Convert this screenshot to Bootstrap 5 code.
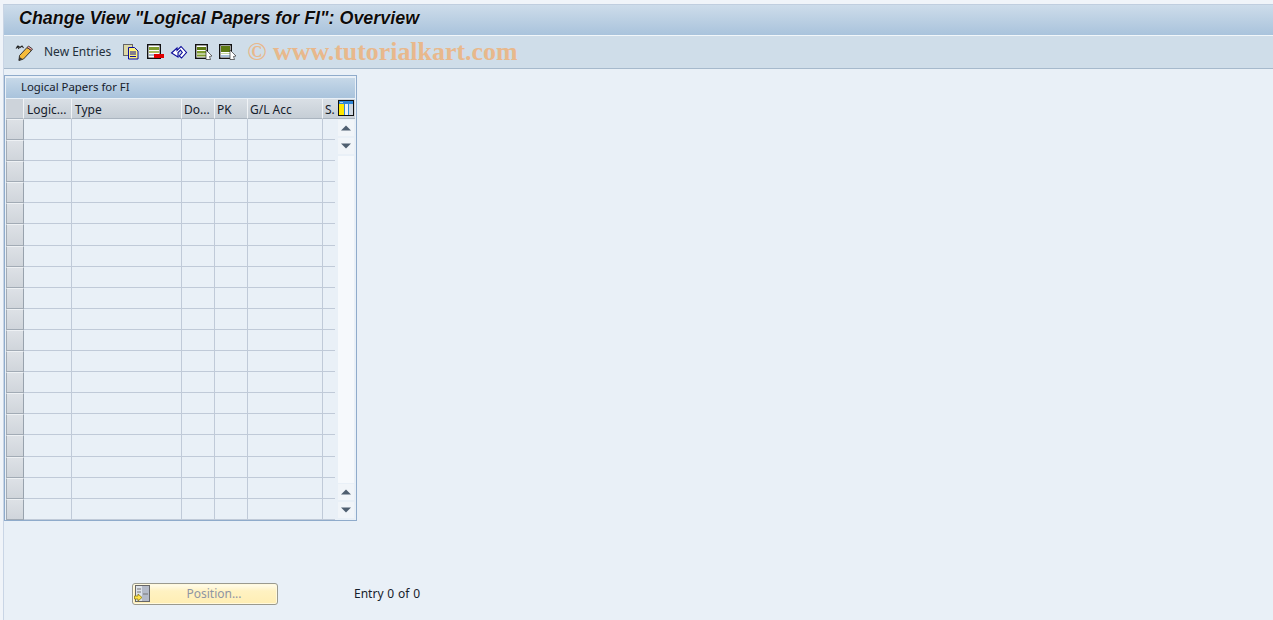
<!DOCTYPE html>
<html lang="en">
<head>
<meta charset="utf-8">
<title>Change View</title>
<link rel="stylesheet" href="https://cdn.jsdelivr.net/npm/bootstrap@5.3.0/dist/css/bootstrap.min.css">
<style>
html,body{height:620px;overflow:hidden}
body{background:#f0f4f9;font-family:"Noto Sans","Liberation Sans",sans-serif;font-size:12px;color:#16202b;line-height:1.2}
.sap-shell{height:616px;margin:4px 0 0 3px;background:#e9f0f7;border-left:1px solid #c9d5e5;border-top:1px solid #c0cedf}
.sap-title{height:31px;background:linear-gradient(#cddcea,#a9c3dc);border-bottom:1px solid #f1f6fa;padding-left:15px;font:italic 700 17.9px/26px "Liberation Sans",sans-serif;color:#0c0c0c;text-shadow:0 0 1px #fff}
.sap-toolbar{height:33px;background:#cfdde9;border-bottom:1px solid #a6b9cc;padding-left:11px;color:#24303c}
.sap-tb-icon{display:block;flex:none;margin-right:8px;overflow:visible}
.sap-tb-pen{margin-right:0}
.sap-new{margin:0 12px 0 11px;font-size:12px}
.sap-mark{font:700 25.9px/1 "Liberation Serif",serif;color:#e8b88c;margin-left:4px;white-space:nowrap}
.sap-panel{width:353px;height:446px;margin:6px 0 0 0;border:1px solid #8fabcb;padding:2px 2px 2px 1px}
.sap-panel-title{height:20px;background:linear-gradient(#c6d8e8,#a9c3dc);padding-left:15px;line-height:18px;font-size:11.4px;color:#16202b;margin-bottom:1px;width:349px}
.sap-grid{width:332px;table-layout:fixed;border-collapse:separate;border-spacing:0;flex:none}
.sap-grid th{height:20px;padding:3px 0 0 3px;font-weight:400;background:linear-gradient(#d9dfe5,#c6ced6);border-right:1px solid #f0f3f6;border-bottom:1px solid #aab4bf;white-space:nowrap;overflow:hidden;color:#16202b}
.sap-grid th:nth-child(n+4){padding-left:2px}
.sap-grid th:last-child{border-right:0}
.sap-grid td{height:21px;padding:0;border-right:1px solid #c0cad8;border-bottom:1px solid #c0cad8}
.sap-grid td:last-child{border:0;background:linear-gradient(to right,#c0cad8 12px,transparent 12px) bottom/100% 1px no-repeat}
.sap-grid th.sap-sel{padding:0;background:#cdd3da}
.sap-grid td.sap-sel{background:linear-gradient(#dde1e6,#d0d5db);border:1px solid #a2abb5;border-top-color:#eef1f4;border-right:1px solid #98a2ad}
.sap-side{width:17px;flex:none}
.sap-corner{height:20px;background:#cdd3da;border-bottom:1px solid #aab4bf;padding-top:1px}
.sap-sbtn{height:16px;width:16px;background:#f1f5f9;margin:1px 0 2px 0}
.sap-strack{height:327px;width:16px;background:#f6f9fc;margin:0 0 1px 0}
.sap-footer{margin-top:62px;padding-left:128px}
.sap-pos{width:146px;height:22px;padding:0 0 0 1px;border:1px solid #9a9a8f;border-radius:3px;background:linear-gradient(#fffdf0,#fff2c2 35%,#ffeeb4);color:#8f95a3;font-size:12px;box-shadow:inset 0 0 0 1px #fff9de}
.sap-pos-label{padding-left:1px}
.sap-entry{margin-left:76px;word-spacing:.7px;color:#16202b}
</style>
</head>
<body>
<div class="sap-shell">
  <div class="sap-title">Change View "Logical Papers for FI": Overview</div>
  <div class="sap-toolbar d-flex align-items-center">
    <svg class="sap-tb-icon sap-tb-pen" width="18" height="17" viewBox="0 0 18 17"><path d="M1 4.500 3 2l2 1.500L7 2l1.500 2M2 2l2 3" fill="none" stroke="#222" stroke-width="1.100"/><path d="M4.500 11.500 12 3.500l4.500 3-8 8.500-4.500 1.500z" fill="#f6bb3a" stroke="#333"/><path d="M12 3.500 13.500 2l4 3-1 1.500z" fill="#f2a0a0" stroke="#333" stroke-width=".9"/><path d="M3.500 16.500 4.500 13l3 2z" fill="#333"/></svg>
    <span class="sap-new">New Entries</span>
    <svg class="sap-tb-icon" width="16" height="16" viewBox="0 0 16 16"><rect x=".5" y=".5" width="9" height="11" fill="#dcd8a8" stroke="#666"/><path d="M5.500 3.500h6l3.500 3.500v8H5.500z" fill="#fff27a" stroke="#0a0aa0"/><path d="M7 8h6M7 10h6M7 12.500h6" stroke="#0a0aa0"/></svg>
    <svg class="sap-tb-icon" width="16" height="16" viewBox="0 0 16 16"><rect x=".7" y=".7" width="12.600" height="13.600" fill="#fff" stroke="#111" stroke-width="1.400"/><rect x="2" y="3" width="10" height="3" fill="#7f9c2e"/><rect x="2" y="7" width="10" height="2" fill="#a9bc62"/><rect x="2" y="10" width="6" height="2" fill="#a8b8c8"/><rect x="7" y="10" width="10" height="4" fill="#e00000"/></svg>
    <svg class="sap-tb-icon" width="16" height="16" viewBox="0 0 16 16"><path d="M.5 9 6 4v2.500L10 2.500l5.500 6-5 5.500-2.200-2 3-3.500L9.500 6 7 8.500V13z" fill="#fff" stroke="#0a0a9a" stroke-width="1.100"/></svg>
    <svg class="sap-tb-icon" width="16" height="16" viewBox="0 0 16 16"><rect x=".7" y=".7" width="11.600" height="13.600" fill="#fff" stroke="#111" stroke-width="1.400"/><rect x="2" y="3" width="9" height="3" fill="#5d7a12"/><rect x="2" y="7" width="9" height="2.500" fill="#7f9c2e"/><rect x="2" y="10.500" width="9" height="2" fill="#7f9c2e"/><path d="M11 6l6 6-2.500.5 1 3H11z" fill="#fff" stroke="#333" stroke-width=".7"/></svg>
    <svg class="sap-tb-icon" width="16" height="16" viewBox="0 0 16 16"><rect x=".7" y=".7" width="11.600" height="13.600" fill="#fff" stroke="#111" stroke-width="1.400"/><rect x="2" y="2" width="9" height="6" fill="#5d7a12"/><rect x="2" y="9" width="9" height="1" fill="#c6d6a0"/><rect x="2" y="11" width="9" height="2" fill="#a8c0d8"/><path d="M11 6l6 6-2.500.5 1 3H11z" fill="#fff" stroke="#333" stroke-width=".7"/></svg>
    <span class="sap-mark">© www.tutorialkart.com</span>
  </div>
  <div class="sap-panel">
    <div class="sap-panel-title">Logical Papers for FI</div>
    <div class="d-flex">
      <table class="sap-grid">
        <colgroup><col style="width:18px"><col style="width:48px"><col style="width:110px"><col style="width:33px"><col style="width:33px"><col style="width:75px"><col style="width:15px"></colgroup>
        <thead><tr><th class="sap-sel"></th><th>Logic...</th><th>Type</th><th>Do...</th><th>PK</th><th>G/L Acc</th><th>S.</th></tr></thead>
        <tbody>
          <tr><td class="sap-sel"></td><td></td><td></td><td></td><td></td><td></td><td></td></tr>
          <tr><td class="sap-sel"></td><td></td><td></td><td></td><td></td><td></td><td></td></tr>
          <tr><td class="sap-sel"></td><td></td><td></td><td></td><td></td><td></td><td></td></tr>
          <tr><td class="sap-sel"></td><td></td><td></td><td></td><td></td><td></td><td></td></tr>
          <tr><td class="sap-sel"></td><td></td><td></td><td></td><td></td><td></td><td></td></tr>
          <tr><td class="sap-sel"></td><td></td><td></td><td></td><td></td><td></td><td></td></tr>
          <tr><td class="sap-sel"></td><td></td><td></td><td></td><td></td><td></td><td></td></tr>
          <tr><td class="sap-sel"></td><td></td><td></td><td></td><td></td><td></td><td></td></tr>
          <tr><td class="sap-sel"></td><td></td><td></td><td></td><td></td><td></td><td></td></tr>
          <tr><td class="sap-sel"></td><td></td><td></td><td></td><td></td><td></td><td></td></tr>
          <tr><td class="sap-sel"></td><td></td><td></td><td></td><td></td><td></td><td></td></tr>
          <tr><td class="sap-sel"></td><td></td><td></td><td></td><td></td><td></td><td></td></tr>
          <tr><td class="sap-sel"></td><td></td><td></td><td></td><td></td><td></td><td></td></tr>
          <tr><td class="sap-sel"></td><td></td><td></td><td></td><td></td><td></td><td></td></tr>
          <tr><td class="sap-sel"></td><td></td><td></td><td></td><td></td><td></td><td></td></tr>
          <tr><td class="sap-sel"></td><td></td><td></td><td></td><td></td><td></td><td></td></tr>
          <tr><td class="sap-sel"></td><td></td><td></td><td></td><td></td><td></td><td></td></tr>
          <tr><td class="sap-sel"></td><td></td><td></td><td></td><td></td><td></td><td></td></tr>
          <tr><td class="sap-sel"></td><td></td><td></td><td></td><td></td><td></td><td></td></tr>
        </tbody>
      </table>
      <div class="sap-side">
        <div class="sap-corner"><svg class="d-block" width="16" height="16" viewBox="0 0 16 16"><rect x="0" y="0" width="16" height="16" fill="#111"/><rect x="1" y="1" width="14" height="3" fill="#2f86d8"/><rect x="2" y="2" width="3" height="1" fill="#a8d0f0"/><rect x="1" y="4" width="5" height="11" fill="#ffe600"/><rect x="6" y="4" width="1" height="11" fill="#2f86d8"/><rect x="7" y="4" width="3" height="11" fill="#eef2f6"/><rect x="10" y="4" width="1" height="11" fill="#2f86d8"/><rect x="11" y="4" width="4" height="11" fill="#cfd8e2"/></svg></div>
        <div class="sap-sbtn"><svg class="d-block" width="16" height="16" viewBox="0 0 16 16"><path d="M3 10.500 8 5.500l5 5z" fill="#4f5f70"/></svg></div>
        <div class="sap-sbtn"><svg class="d-block" width="16" height="16" viewBox="0 0 16 16"><path d="M3 5.500h10l-5 5z" fill="#4f5f70"/></svg></div>
        <div class="sap-strack"></div>
        <div class="sap-sbtn"><svg class="d-block" width="16" height="16" viewBox="0 0 16 16"><path d="M3 10.500 8 5.500l5 5z" fill="#4f5f70"/></svg></div>
        <div class="sap-sbtn"><svg class="d-block" width="16" height="16" viewBox="0 0 16 16"><path d="M3 5.500h10l-5 5z" fill="#4f5f70"/></svg></div>
      </div>
    </div>
  </div>
  <div class="sap-footer d-flex align-items-center">
    <button type="button" class="sap-pos d-flex align-items-center" disabled>
      <svg class="d-block flex-none" width="16" height="18" viewBox="0 0 16 18"><rect x="1.500" y=".5" width="14" height="16" fill="#dde2ea" stroke="#666"/><rect x="8" y="1" width="7" height="15" fill="#b4bac8"/><path d="M3 4h4M3 7h4M9 9h5" stroke="#777"/><path d="M.5 11h3.500V9l4 3.500-4 3.500v-2H.5z" fill="#ffe24a" stroke="#8a7a10" stroke-width=".8"/></svg>
      <span class="sap-pos-label flex-grow-1 text-center">Position...</span>
    </button>
    <span class="sap-entry">Entry 0 of 0</span>
  </div>
</div>
<script src="https://cdn.jsdelivr.net/npm/bootstrap@5.3.0/dist/js/bootstrap.bundle.min.js"></script>
</body>
</html>
